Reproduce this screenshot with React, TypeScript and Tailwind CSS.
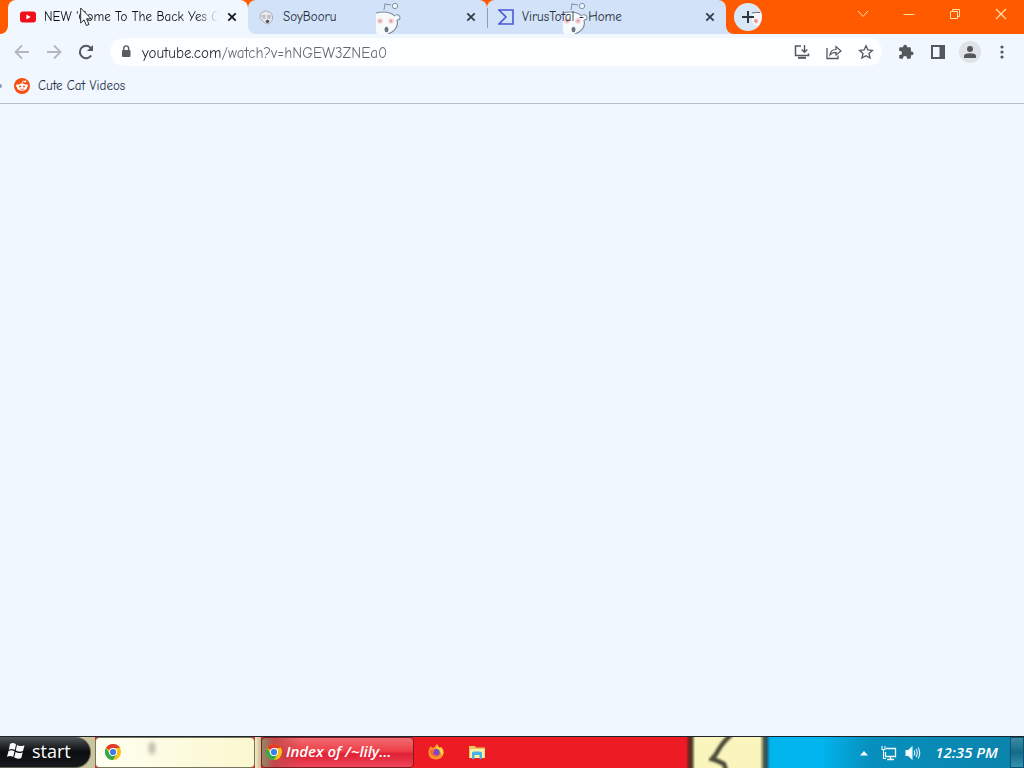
import type { ReactNode } from 'react';

const UI_FONT = 'font-["Comic_Sans_MS","Comic_Neue","Open_Sans",sans-serif]';
const TASKBAR_FONT = 'font-["Open_Sans","Noto_Sans",sans-serif]';

function Flare({ side, color }: { side: 'left' | 'right'; color: string }) {
  return (
    <svg
      viewBox="0 0 8 8"
      className={`absolute bottom-0 z-10 h-2 w-2 ${side === 'left' ? '-left-2' : '-right-2'}`}
      aria-hidden="true"
    >
      <path d={side === 'left' ? 'M8 0V8H0A8 8 0 0 0 8 0Z' : 'M0 0V8H8A8 8 0 0 1 0 0Z'} fill={color} />
    </svg>
  );
}

// Theme artwork that peeks through the inactive tabs
function Mascot({ className }: { className: string }) {
  return (
    <svg viewBox="0 0 28 34" className={`pointer-events-none absolute top-0 h-[34px] w-7 ${className}`} aria-hidden="true">
      <path d="M1 13Q12 10 22 15Q26 23 20 30Q16 33 12 34H3Q0 32 1 28Z" fill="#f7fafd" />
      <path d="M1 13Q13 10 20 16M22 20Q24 27 17 32L13 34" fill="none" stroke="#7d8a9c" strokeWidth="1.2" />
      <path d="M9 10L10 4L16 5" fill="none" stroke="#8795aa" strokeWidth="1.1" />
      <circle cx="20" cy="6" r="2.7" fill="#eef5fd" stroke="#8795aa" strokeWidth="1" />
      <path d="M20 15Q25 14 25 18Q25 20 22 20" fill="#eef5fd" stroke="#8795aa" strokeWidth="1.1" />
      <circle cx="5" cy="21" r="2.8" fill="#f5cfd2" />
      <circle cx="5" cy="21" r="1.2" fill="#dfa0a8" />
      <circle cx="16" cy="21" r="2.8" fill="#f5cfd2" />
      <circle cx="16" cy="21" r="1.2" fill="#dfa0a8" />
      <ellipse cx="11.5" cy="29.5" rx="2" ry="2.7" fill="#6d7484" />
    </svg>
  );
}

function CloseButton({ label, color }: { label: string; color: string }) {
  return (
    <button type="button" aria-label={label} className="flex h-4 w-4 shrink-0 items-center justify-center">
      <svg viewBox="0 0 16 16" className="h-4 w-4" fill="none" stroke={color} strokeWidth="1.8">
        <path d="M4.3 4.3L11.7 11.7M11.7 4.3L4.3 11.7" />
      </svg>
    </button>
  );
}

function YouTubeIcon() {
  return (
    <svg viewBox="0 0 16 16" className="h-4 w-4 shrink-0" aria-hidden="true">
      <rect x="0" y="2.5" width="16" height="11" rx="3" fill="#f10f19" />
      <path d="M6.4 5.5V10.5L10.7 8Z" fill="#fff" />
    </svg>
  );
}

function SoyIcon() {
  return (
    <svg viewBox="0 0 16 16" className="h-4 w-4 shrink-0" aria-hidden="true">
      <path d="M1 8Q1 3 5 3Q6 0 8 2.5Q13 3 13.5 8Q14 13 9 15Q5 14 4 12Q1 11 1 8Z" fill="#e8eaec" stroke="#9aa0a8" strokeWidth="0.8" />
      <path d="M2.5 7H6.5M8 7H12M3.5 9H6.5M8.5 9H11.5" stroke="#8a9099" strokeWidth="0.9" />
      <ellipse cx="8.5" cy="12.3" rx="1.7" ry="1.6" fill="#464b55" />
    </svg>
  );
}

function SigmaIcon() {
  return (
    <svg viewBox="0 0 16 16" className="h-4 w-4 shrink-0" fill="none" stroke="#4b57d8" strokeWidth="1.6" aria-hidden="true">
      <path d="M1 1H15V15H1L8 8Z" />
    </svg>
  );
}

function RedditIcon() {
  return (
    <svg viewBox="0 0 16 16" className="h-4 w-4 shrink-0" aria-hidden="true">
      <circle cx="8" cy="8" r="8" fill="#f5500f" />
      <circle cx="3.5" cy="7.8" r="1.5" fill="#fff" />
      <circle cx="12.5" cy="7.8" r="1.5" fill="#fff" />
      <ellipse cx="8" cy="9.2" rx="5" ry="3.6" fill="#fff" />
      <path d="M8 6L8.8 3L11 3.5" fill="none" stroke="#fff" strokeWidth="0.8" />
      <circle cx="11.3" cy="3.6" r="1" fill="#fff" />
      <circle cx="6" cy="8.5" r="1" fill="#f5500f" />
      <circle cx="10" cy="8.5" r="1" fill="#f5500f" />
      <path d="M6 10.8Q8 12.2 10 10.8" fill="none" stroke="#f5500f" strokeWidth="0.7" />
    </svg>
  );
}

function ChromeIcon() {
  return (
    <svg viewBox="0 0 16 16" className="h-4 w-4 shrink-0" aria-hidden="true">
      <circle cx="8" cy="8" r="8" fill="#fbc116" />
      <path d="M8 8L1.07 4A8 8 0 0 1 14.93 4H8Z" fill="#e33b2e" />
      <path d="M1.07 4L4.54 10L8 12V16A8 8 0 0 1 1.07 4Z" fill="#2da94f" />
      <path d="M4.54 10H11.46L8 16Z" fill="#2da94f" />
      <circle cx="8" cy="8" r="4" fill="#fff" />
      <circle cx="8" cy="8" r="3.1" fill="#3b7de9" />
    </svg>
  );
}

function ToolButton({ label, color = '#54575b', children }: { label: string; color?: string; children: ReactNode }) {
  return (
    <button type="button" aria-label={label} className="flex h-8 w-8 shrink-0 items-center justify-center">
      <svg viewBox="0 0 16 16" className="h-4 w-4 overflow-visible" fill="none" stroke={color} strokeWidth="1.5">
        {children}
      </svg>
    </button>
  );
}

function WindowButton({ label, children }: { label: string; children: ReactNode }) {
  return (
    <button type="button" aria-label={label} className="flex h-7 w-[46px] shrink-0 items-center justify-center">
      <svg viewBox="0 0 12 12" className="h-3 w-3" fill="none" stroke="#ffe0a8" strokeWidth="1">
        {children}
      </svg>
    </button>
  );
}

function TabStrip() {
  return (
    <header className="relative flex h-[34px] items-start bg-[#ff5a00] pl-2">
      <div className="flex h-full min-w-0 flex-1">
        <div className="relative flex h-full min-w-0 max-w-[240px] flex-1 items-center rounded-t-lg bg-[#f0f7ff] pr-2 pl-3">
          <Flare side="left" color="#f0f7ff" />
          <Flare side="right" color="#f0f7ff" />
          <YouTubeIcon />
          <span className="mr-1.5 ml-2 min-w-0 flex-1 overflow-hidden text-[13px] whitespace-nowrap text-[#0c0e12] [mask-image:linear-gradient(to_right,black_88%,transparent)]">
            NEW 'Come To The Back Yes C
          </span>
          <CloseButton label="Close NEW tab" color="#15181d" />
        </div>
        <div className="relative flex h-full min-w-0 max-w-[239px] flex-1 items-center rounded-t-lg bg-[#d2e3f9] pr-2 pl-[11px]">
          <Mascot className="left-[127px]" />
          <SoyIcon />
          <span className="relative ml-2 min-w-0 flex-1 truncate text-[13px] text-[#262c37]">SoyBooru</span>
          <CloseButton label="Close SoyBooru" color="#353c48" />
        </div>
        <div className="relative flex h-full min-w-0 max-w-[239px] flex-1 items-center rounded-t-lg bg-[#d2e3f9] pr-2 pl-[11px]">
          <span className="absolute top-2 left-0 h-5 w-px bg-[#8e9db4]" />
          <Flare side="right" color="#d2e3f9" />
          <Mascot className="left-[75px]" />
          <SigmaIcon />
          <span className="relative ml-2 min-w-0 flex-1 truncate text-[13px] text-[#262c37]">VirusTotal - Home</span>
          <CloseButton label="Close VirusTotal" color="#353c48" />
        </div>
        <button type="button" aria-label="New tab" className="mt-[3px] ml-2 h-7 w-7 shrink-0">
          <svg viewBox="0 0 28 28" className="h-7 w-7">
            <circle cx="14" cy="14" r="14" fill="#dae7f7" />
            <path d="M18 10Q24 8 27 10Q29 16 25 22Q21 24 18 19Z" fill="#f6f7fb" />
            <path d="M18 10Q22 9 26 9.5" fill="none" stroke="#606975" />
            <circle cx="22" cy="18" r="2.3" fill="#f3b4b2" />
            <circle cx="22" cy="18" r="0.9" fill="#d9777c" />
            <path d="M14 8V20M8 14H20" stroke="#30343b" strokeWidth="2" />
          </svg>
        </button>
      </div>
      <div className="flex shrink-0">
        <WindowButton label="Search tabs">
          <path d="M1 3L6 8.5L11 3" />
        </WindowButton>
        <WindowButton label="Minimize">
          <path d="M0.5 6.5H11.5" />
        </WindowButton>
        <WindowButton label="Restore">
          <path d="M1.5 3.5H8.5V10.5H1.5ZM3.5 3.5V1.5H10.5V8.5H8.5" />
        </WindowButton>
        <WindowButton label="Close">
          <path d="M1 1L11 11M11 1L1 11" strokeWidth="1.2" />
        </WindowButton>
      </div>
      {/* Mouse pointer */}
      <svg viewBox="0 0 12 20" className="pointer-events-none absolute top-[7px] left-20 z-20 h-5 w-3" aria-hidden="true">
        <path d="M0.7 1V16L4 12.8L6.4 18.5L9 17.4L6.6 11.8H11.2Z" fill="#fdfeff" stroke="#252a33" strokeWidth="1" />
      </svg>
    </header>
  );
}

function Toolbar() {
  return (
    <div className="flex h-9 items-center gap-1 px-1.5">
      <div className="flex shrink-0">
        <ToolButton label="Back" color="#b3b8c0">
          <path d="M15 8H2M8 1.5L1.5 8L8 14.5" strokeWidth="1.8" />
        </ToolButton>
        <ToolButton label="Forward" color="#b3b8c0">
          <path d="M1 8H14M8 1.5L14.5 8L8 14.5" strokeWidth="1.8" />
        </ToolButton>
        <ToolButton label="Reload">
          <path d="M13.2 11.5A6.2 6.2 0 1 1 12.8 4" strokeWidth="2" />
          <path d="M15 1V7H9Z" fill="#54575b" stroke="none" />
        </ToolButton>
      </div>
      <form className="mr-1 ml-1 flex h-7 min-w-0 flex-1 items-center rounded-full bg-[#fdfeff] pl-2" onSubmit={(e) => e.preventDefault()}>
        <svg viewBox="0 0 16 16" className="h-4 w-4 shrink-0" aria-hidden="true">
          <rect x="4" y="6" width="8.5" height="7" rx="1" fill="#595c60" />
          <path d="M5.8 6V4.3A2.4 2.4 0 0 1 10.6 4.3V6" fill="none" stroke="#595c60" strokeWidth="1.4" />
        </svg>
        {/* The host reads darker than the path */}
        <input
          aria-label="Address"
          defaultValue="youtube.com/watch?v=hNGEW3ZNEa0"
          className="ml-2 h-7 min-w-0 flex-1 bg-[linear-gradient(to_right,#24272b_80px,#63666a_80px)] bg-clip-text pt-0.5 text-[15px] text-transparent outline-none"
        />
        <ToolButton label="Install">
          <path d="M7 2H1.5V11.5H14.5V9.5" strokeWidth="1.5" />
          <path d="M4 13.8H12" strokeWidth="2" />
          <path d="M10.5 1V8M7.7 5.5L10.5 8.3L13.3 5.5" strokeWidth="1.4" />
        </ToolButton>
        <ToolButton label="Share">
          <path d="M1 4V14.5H12V11.5" strokeWidth="1.3" />
          <path d="M4 11Q4.5 5.5 10 5.5V2.5L15 7L10 11V8.3Q6 8.3 4 11Z" strokeWidth="1.2" />
        </ToolButton>
        <ToolButton label="Bookmark this page">
          <path d="M8 1.8L9.9 6L14.4 6.4L11 9.5L12 14L8 11.7L4 14L5 9.5L1.6 6.4L6.1 6Z" strokeWidth="1.3" />
        </ToolButton>
      </form>
      <div className="flex shrink-0">
        <ToolButton label="Extensions">
          <path
            d="M13.7 7.5H12.9V4.5Q12.9 3.2 11.6 3.2H9V2.6A1.9 1.9 0 0 0 5.2 2.6V3.2H2.5Q1.2 3.2 1.2 4.5V7H2A2 2 0 0 1 2 11H1.2V13.5Q1.2 14.8 2.5 14.8H5V14A2 2 0 0 1 9 14V14.8H11.6Q12.9 14.8 12.9 13.5V11.2H13.7A1.85 1.85 0 0 0 13.7 7.5Z"
            fill="#54575b"
            stroke="none"
          />
        </ToolButton>
        <ToolButton label="Side panel">
          <path d="M2 2H14V14H2Z" strokeWidth="2" />
          <path d="M9.5 2H14V14H9.5Z" fill="#54575b" stroke="none" />
        </ToolButton>
        <ToolButton label="Profile">
          <circle cx="8" cy="8" r="11" fill="#dfe3e8" stroke="none" />
          <circle cx="8" cy="5" r="3" fill="#54575b" stroke="none" />
          <path d="M2 14V12Q2 9.3 8 9.3Q14 9.3 14 12V14Z" fill="#54575b" stroke="none" />
        </ToolButton>
        <ToolButton label="Menu">
          <circle cx="8" cy="3" r="1.6" fill="#54575b" stroke="none" />
          <circle cx="8" cy="8" r="1.6" fill="#54575b" stroke="none" />
          <circle cx="8" cy="13" r="1.6" fill="#54575b" stroke="none" />
        </ToolButton>
      </div>
    </div>
  );
}

function Taskbar() {
  return (
    <footer className={`flex h-8 border-t border-[#1c252b] bg-[#ed1c24] ${TASKBAR_FONT}`}>
      <div className="flex shrink-0 bg-[#c9c69e] pr-1">
        <button
          type="button"
          className="flex h-full w-[91px] items-center gap-1.5 rounded-r-full border-r border-b border-[#626454] bg-linear-to-b from-[#51575b] via-[#0b0d0f] via-50% to-[#171b1d] pb-0.5 pl-1.5 text-lg text-white"
        >
          <svg viewBox="0 0 20 18" className="h-[18px] w-5" aria-hidden="true">
            <path
              d="M4 2Q7 0 10 2.3L8.8 8Q6 6.2 2.8 7.8ZM11 3Q14 5 18.5 3.2L17 9Q13 10.5 9.8 8.6ZM2.5 9Q5.5 7.5 8.5 9.3L7.2 15Q4.3 13.3 1 14.8ZM9.5 10Q13 12 16.7 10.2L15.3 16Q12 17.5 8.2 15.6Z"
              fill="#f7fbff"
            />
          </svg>
          start
        </button>
      </div>
      <button
        type="button"
        aria-label="Google Chrome"
        className="relative flex h-full w-40 min-w-0 items-center rounded-sm border border-[#77765c] bg-linear-to-r from-[#fffff1] to-[#fbf7cf] pb-0.5 pl-[9px]"
      >
        <ChromeIcon />
        <span className="absolute top-1 left-[53px] h-3 w-1.5 rounded-full bg-[#77756a]/50 blur-[2px]" />
      </button>
      <div className="w-1.5 shrink-0 bg-linear-to-r from-[#f1edc4] to-[#cbb893]" />
      <button
        type="button"
        className="flex h-full w-[153px] min-w-0 items-center gap-1 rounded-sm border border-[#7d1c23] bg-[linear-gradient(to_right,#8f8a66_0px,#c4484b_12px,transparent_40px),linear-gradient(to_bottom,#f16c70,#ee3f49_45%,#df2034_55%,#f0455a)] pb-0.5 pl-1 text-[15px] font-semibold text-white italic"
      >
        <ChromeIcon />
        <span className="whitespace-nowrap">Index of /~lily...</span>
      </button>
      <div className="flex min-w-0 flex-1 items-center gap-6 pb-0.5 pl-3.5">
        <button type="button" aria-label="Firefox">
          <svg viewBox="0 0 16 16" className="h-4 w-4">
            <path d="M1 5L3 2L4 4L7 3Q7 1 9 0Q10 3 12 4L13 3Q16 6 15.5 9Q14.5 15.5 8 15.5Q1 15 0.5 9Q0.3 7 1 5Z" fill="#ff9628" />
            <path d="M9 0Q10 3 12 4L13 3Q16 6 15.5 9Q15 11 14 12Q12 4 8 4Q10 2 9 0Z" fill="#ffdc3d" />
            <circle cx="8" cy="8.8" r="3.7" fill="#7945d5" />
            <path d="M2 6Q5 5 7 7Q5 8 5.5 10Q8 12 11 10Q9 14 5 12Q2 10 2 6Z" fill="#f86631" />
          </svg>
        </button>
        <button type="button" aria-label="File Explorer">
          <svg viewBox="0 0 18 16" className="h-4 w-[18px]">
            <path d="M1 2H7L8 3.5H17V14H1Z" fill="#eac45b" />
            <path d="M2 5H16.5V14H2Z" fill="#fff0a5" />
            <path d="M4 9Q4 7.5 6 7.5H12Q14 7.5 14 9V15H11.5V11H6.5V15H4Z" fill="#45b5e8" />
          </svg>
        </button>
      </div>
      {/* Wallpaper strip seen through the glass */}
      <svg viewBox="0 0 84 31" preserveAspectRatio="none" className="h-full w-[84px] shrink-0" aria-hidden="true">
        <defs>
          <linearGradient id="strip">
            <stop offset="0" stopColor="#ed1c24" />
            <stop offset="0.04" stopColor="#6a211b" />
            <stop offset="0.07" stopColor="#49442f" />
            <stop offset="0.11" stopColor="#f9f5bd" />
            <stop offset="0.88" stopColor="#f9f5bd" />
            <stop offset="0.93" stopColor="#515849" />
            <stop offset="0.96" stopColor="#24556a" />
            <stop offset="1" stopColor="#00b5ee" />
          </linearGradient>
          <filter id="soft" x="-20%" y="-20%" width="140%" height="140%">
            <feGaussianBlur stdDeviation="0.8" />
          </filter>
        </defs>
        <rect width="84" height="31" fill="url(#strip)" />
        <path d="M45 -2Q37 5 33 12Q30 18 26 22Q33 24 38 27L40 33" fill="none" stroke="#4c4939" strokeWidth="4.5" filter="url(#soft)" />
      </svg>
      <div className="flex w-[254px] shrink-0 items-center justify-end bg-linear-to-r from-[#00b5ee] from-20% via-[#078fbd] via-40% to-[#0b83ab]">
        <button type="button" aria-label="Show hidden icons" className="mr-3">
          <svg viewBox="0 0 10 6" className="h-1.5 w-2.5">
            <path d="M1 5.5L5 1L9 5.5Z" fill="#f5fbff" />
          </svg>
        </button>
        <button type="button" aria-label="Network" className="mr-2">
          <svg viewBox="0 0 16 16" className="h-4 w-4" fill="none" stroke="#f1faff" strokeWidth="1.3">
            <path d="M5 3.5H14.5V11.5H4.5V7M9.5 12V14.5M6 14.5H13" />
            <path d="M1 1V4.5H4V1M2.5 4.5V13.5H5" strokeWidth="1.1" />
          </svg>
        </button>
        <button type="button" aria-label="Volume" className="mr-3.5">
          <svg viewBox="0 0 16 16" className="h-4 w-4" fill="none" stroke="#e3f6fd" strokeWidth="1.1">
            <path d="M1 5.5H3.5L7 2V14L3.5 10.5H1Z" fill="#f4fbff" />
            <path d="M9 5.5Q10.5 8 9 10.5M11 4Q13.5 8 11 12M13 2.5Q16.5 8 13 13.5" />
          </svg>
        </button>
        <time className="mr-3 text-[15px] font-semibold whitespace-nowrap text-white italic">12:35 PM</time>
        <button
          type="button"
          aria-label="Show desktop"
          className="h-full w-3.5 border border-[#07546e] bg-linear-to-b from-[#3c8ba3] via-[#126b88] to-[#3393b0]"
        />
      </div>
    </footer>
  );
}

export default function App() {
  return (
    <div className={`flex min-h-screen flex-col bg-[#f0f7ff] ${UI_FONT}`}>
      <TabStrip />
      <Toolbar />
      <nav aria-label="Bookmarks" className="flex h-[34px] items-center gap-3 border-b border-[#b7bfcd] pb-0.5">
        <span className="h-1 w-0.5 rounded-r bg-[#8d9ab0]" />
        <a href="#cats" className="flex items-center gap-2 text-[13px] text-[#252d48]">
          <RedditIcon />
          Cute Cat Videos
        </a>
      </nav>
      <main className="flex-1" />
      <Taskbar />
    </div>
  );
}
